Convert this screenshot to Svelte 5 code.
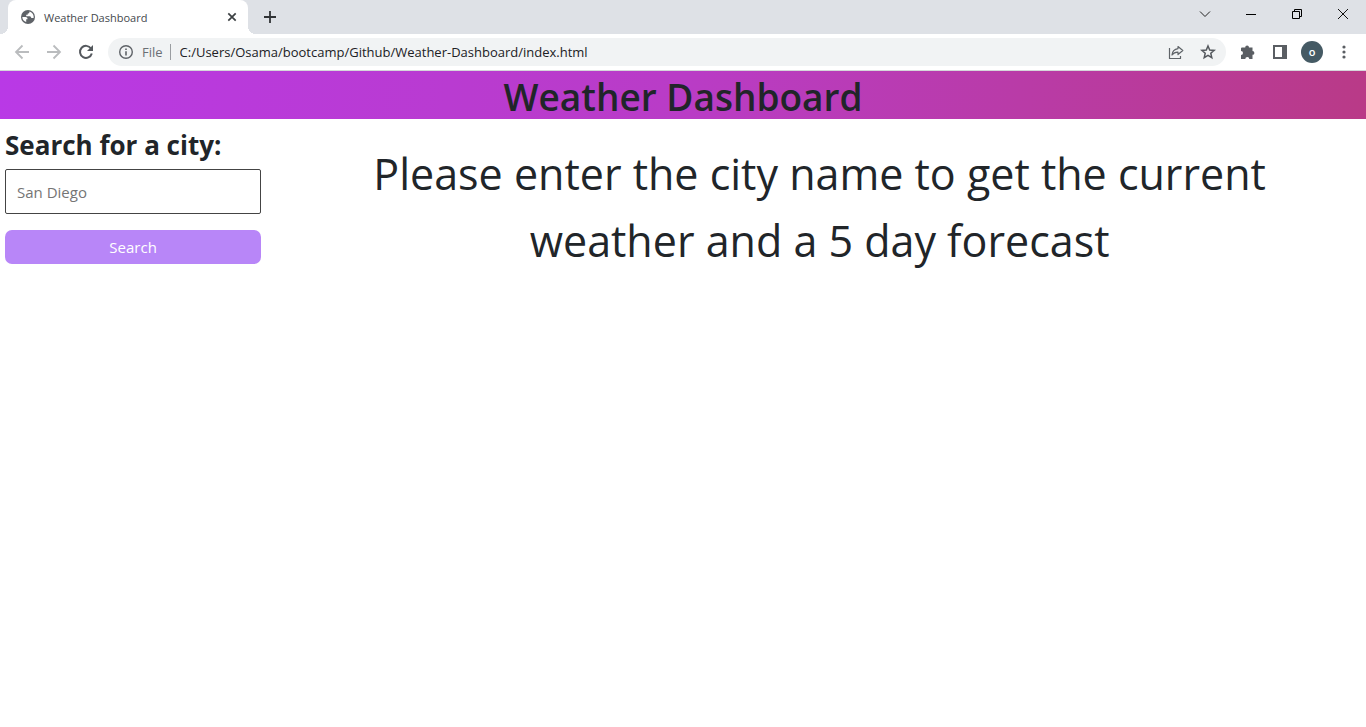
<script>
  let city = $state('');
  let address = $state('C:/Users/Osama/bootcamp/Github/Weather-Dashboard/index.html');
</script>

<div class="browser">
  <div class="tabs">
    <div class="tab">
      <svg class="globe" viewBox="0 0 16 16" width="16" height="16" aria-hidden="true">
        <circle cx="8" cy="8" r="7" fill="#5f6368" />
        <path d="M2.300 8.100h3.200c1.400 0 2.100.7 2 2.100H6.200v2.900C4 12.500 2.300 10.500 2.300 8.100ZM9.500 2.500c0 1.400-.6 2-1.800 2v1.300H6.200v1.500h3.600c1 0 1.100.9 1.500 1.600h2.300c.6-2.700-1.200-5.500-4.100-6.400Z" fill="#fff" />
      </svg>
      <span class="title">Weather Dashboard</span>
      <button class="close" aria-label="Close tab">
        <svg viewBox="0 0 10 10" width="10" height="10"><path d="m1.300 1.300 7.400 7.400m0-7.400L1.300 8.700" stroke="#3c4043" stroke-width="1.700" /></svg>
      </button>
    </div>
    <button class="new" aria-label="New tab">
      <svg viewBox="0 0 12 12" width="12" height="12"><path d="M6 0v12M0 6h12" stroke="#303336" stroke-width="1.800" /></svg>
    </button>
    <div class="window">
      <button aria-label="Search tabs"><svg viewBox="0 0 12 12" width="12" height="12"><path d="m1 3.500 5 5 5-5" fill="none" stroke="#222" /></svg></button>
      <button aria-label="Minimize"><svg viewBox="0 0 12 12" width="12" height="12"><path d="M1 6.500h10" stroke="#000" /></svg></button>
      <button aria-label="Restore"><svg viewBox="0 0 12 12" width="12" height="12"><path d="M1.500 3.500h7v7h-7zM3.500 3.500v-2h7v7h-2" fill="none" stroke="#000" /></svg></button>
      <button aria-label="Close window"><svg viewBox="0 0 12 12" width="12" height="12"><path d="m1 1 10 10m0-10L1 11" stroke="#111" /></svg></button>
    </div>
  </div>

  <div class="toolbar">
    <div class="nav">
      <button aria-label="Back"><svg viewBox="0 0 16 16" width="16" height="16"><path d="M15 8H2m6.500-6.500L2 8l6.500 6.500" fill="none" stroke="#babcbe" stroke-width="1.800" /></svg></button>
      <button aria-label="Forward"><svg viewBox="0 0 16 16" width="16" height="16"><path d="M1 8h13M7.500 1.500 14 8l-6.500 6.500" fill="none" stroke="#babcbe" stroke-width="1.800" /></svg></button>
      <button aria-label="Reload"><svg viewBox="0 0 16 16" width="16" height="16"><path d="M13 4.500A6 6 0 1 0 13.800 9.500" fill="none" stroke="#54585d" stroke-width="2" /><path d="M15 1v6H9z" fill="#54585d" /></svg></button>
    </div>
    <div class="address">
      <svg viewBox="0 0 16 16" width="16" height="16" aria-hidden="true"><circle cx="8" cy="8" r="6.300" fill="none" stroke="#5f6368" stroke-width="1.400" /><path d="M8 7.200v4.300M8 4.400V6" stroke="#5f6368" stroke-width="1.600" /></svg>
      <span class="scheme">File</span>
      <input class="url" aria-label="Address" bind:value={address} />
      <button aria-label="Share"><svg viewBox="0 0 16 16" width="16" height="16"><path d="M1.500 4v10.500h11V12M10 2.500 14.800 6.500 10 10.500V8.200C7.400 8.100 5.500 9 4 11 4.300 7.400 6.400 5.100 10 4.600z" fill="none" stroke="#5f6368" stroke-width="1.200" stroke-linejoin="round" /></svg></button>
      <button aria-label="Bookmark"><svg viewBox="0 0 16 16" width="16" height="16"><path d="m8 2 1.700 4 4.500.4-3.400 2.900 1 4.300L8 11.300l-3.800 2.300 1-4.300-3.400-2.900 4.500-.4z" fill="none" stroke="#54585d" stroke-width="1.500" /></svg></button>
    </div>
    <div class="tools">
      <button aria-label="Extensions"><svg viewBox="0 0 16 16" width="16" height="16"><path d="M2 3.500h3.200a1.900 1.900 0 1 1 3.800 0h3.500V7a1.900 1.900 0 1 1 0 3.800V15H9.300a2 2 0 0 0-4 0H1v-4a2 2 0 0 0 0-4V4.500q0-1 1-1Z" fill="#5a5e63" /></svg></button>
      <button aria-label="Side panel"><svg viewBox="0 0 16 16" width="16" height="16"><path d="M1 1h14v14H1zM3 3v10h7V3z" fill="#5a5e63" fill-rule="evenodd" /></svg></button>
      <button class="profile" aria-label="Profile">o</button>
      <button aria-label="Menu"><svg viewBox="0 0 16 16" width="16" height="16" fill="#5a5e63"><circle cx="8" cy="3" r="1.600" /><circle cx="8" cy="8" r="1.600" /><circle cx="8" cy="13" r="1.600" /></svg></button>
    </div>
  </div>
</div>

<header><h1>Weather Dashboard</h1></header>

<div class="page">
  <form onsubmit={(e) => e.preventDefault()}>
    <label for="city">Search for a city:</label>
    <input id="city" type="text" placeholder="San Diego" bind:value={city} />
    <button type="submit">Search</button>
  </form>
  <main>
    <p>Please enter the city name to get the current weather and a 5 day forecast</p>
  </main>
</div>

<style>
  :global(body) {
    margin: 0;
    background: #fff;
    color: #212529;
    font-family: 'Segoe UI', 'Open Sans', 'Noto Sans', sans-serif;
    font-size: 15px;
  }
  :global(*) {
    box-sizing: border-box;
  }
  button {
    padding: 0;
    border: 0;
    background: none;
    font-family: inherit;
  }
  svg {
    display: block;
    flex: none;
  }
  .tabs {
    display: flex;
    height: 34px;
    padding-left: 8px;
    background: #dee1e6;
  }
  .tab {
    position: relative;
    display: flex;
    align-items: center;
    width: 240px;
    padding: 0 10px 0 12px;
    border-radius: 8px 8px 0 0;
    background: #fff;
  }
  .tab::before,
  .tab::after {
    content: '';
    position: absolute;
    bottom: 0;
    width: 8px;
    height: 8px;
  }
  .tab::before {
    right: 100%;
    background: radial-gradient(circle at 0 0, transparent 8px, #fff 8px);
  }
  .tab::after {
    left: 100%;
    background: radial-gradient(circle at 100% 0, transparent 8px, #fff 8px);
  }
  .title {
    flex: 1;
    margin-left: 8px;
    color: #45494d;
    font-size: 11px;
    white-space: nowrap;
  }
  .close,
  .new {
    display: grid;
    place-items: center;
    width: 12px;
  }
  .new {
    width: 44px;
  }
  .window {
    display: flex;
    height: 28px;
    margin-left: auto;
  }
  .window button {
    display: grid;
    place-items: center;
    width: 46px;
  }
  .toolbar {
    display: flex;
    align-items: center;
    height: 37px;
    padding: 0 14px;
    border-bottom: 1px solid #d5d7da;
    background: #fff;
  }
  .nav,
  .tools {
    display: flex;
    align-items: center;
    gap: 16px;
  }
  .address {
    display: flex;
    flex: 1;
    align-items: center;
    height: 28px;
    margin: 0 14px;
    padding: 0 10px;
    border-radius: 14px;
    background: #f1f3f4;
  }
  .address button {
    margin-left: 16px;
  }
  .scheme {
    margin-left: 8px;
    padding-right: 7px;
    border-right: 1px solid #9a9da1;
    color: #6b6f74;
    font-size: 13px;
    line-height: 16px;
  }
  .url {
    flex: 1;
    min-width: 0;
    margin-left: 9px;
    padding: 0;
    border: 0;
    outline: 0;
    background: none;
    color: #202124;
    font-family: inherit;
    font-size: 13px;
  }
  .profile {
    width: 22px;
    height: 22px;
    margin: 0 -3px;
    border-radius: 50%;
    background: #455a64;
    color: #fff;
    font-size: 11px;
    font-weight: 600;
    line-height: 20px;
  }
  header {
    background: linear-gradient(95deg, #b939e6, #b93cc6 50%, #b93a87);
  }
  h1 {
    margin: 0;
    padding-top: 4px;
    font-size: 37px;
    font-weight: 600;
    line-height: 44px;
    text-align: center;
  }
  .page {
    display: flex;
  }
  form {
    display: flex;
    flex: 0 0 20%;
    flex-direction: column;
    padding: 8px 12px 0 5px;
  }
  label {
    font-size: 26px;
    font-weight: 700;
    line-height: 36px;
    white-space: nowrap;
  }
  #city {
    height: 45px;
    margin: 6px 0 16px;
    padding: 0 11px;
    border: 1px solid #444;
    border-radius: 2px;
    color: #212529;
    font-family: inherit;
    font-size: 15px;
  }
  #city::placeholder {
    color: #757575;
  }
  form button {
    height: 34px;
    border-radius: 7px;
    background: #b886f8;
    color: #fff;
    font-size: 15px;
  }
  main {
    flex: 1;
    padding: 21px 80px;
  }
  p {
    margin: 0;
    font-size: 43px;
    line-height: 67px;
    text-align: center;
  }
</style>
